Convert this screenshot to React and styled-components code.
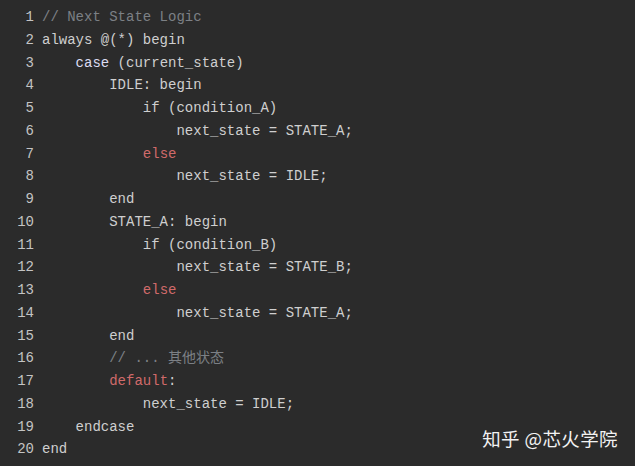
import React from "react";
import styled, { createGlobalStyle } from "styled-components";

const GlobalStyle = createGlobalStyle`
  html, body {
    margin: 0;
    padding: 0;
    background: #2b2b2b;
  }
`;

const Editor = styled.div`
  position: relative;
  width: 635px;
  height: 466px;
  box-sizing: border-box;
  padding-top: 6px;
  background: #2b2b2b;
  font-family: "Liberation Mono", "DejaVu Sans Mono", "Noto Sans CJK SC", monospace;
  font-size: 14px;
  overflow: hidden;
`;

const Line = styled.div`
  display: flex;
  height: 22.75px;
  line-height: 22.75px;
  white-space: pre;
`;

const LineNo = styled.span`
  width: 34px;
  text-align: right;
  padding-right: 8px;
  color: #c4c4c4;
`;

const Code = styled.span`
  color: #cfcfcf;
`;

const Tok = styled.span`
  color: ${(p) =>
    p.$kind === "comment" ? "#7c8085" : p.$kind === "kw" ? "#dcdcf2" : "#d06a6a"};
`;

const Watermark = styled.div`
  position: absolute;
  right: 17px;
  bottom: 15px;
  color: #f2f2f2;
  font-family: "Noto Sans CJK SC", "Noto Sans", sans-serif;
  font-size: 18.5px;
  letter-spacing: 0.4px;
`;

const lines = [
  [["comment", "// Next State Logic"]],
  [[null, "always @(*) begin"]],
  [[null, "    "], ["kw", "case"], [null, " (current_state)"]],
  [[null, "        IDLE: begin"]],
  [[null, "            if (condition_A)"]],
  [[null, "                next_state = STATE_A;"]],
  [[null, "            "], ["red", "else"]],
  [[null, "                next_state = IDLE;"]],
  [[null, "        end"]],
  [[null, "        STATE_A: begin"]],
  [[null, "            if (condition_B)"]],
  [[null, "                next_state = STATE_B;"]],
  [[null, "            "], ["red", "else"]],
  [[null, "                next_state = STATE_A;"]],
  [[null, "        end"]],
  [[null, "        "], ["comment", "// ... 其他状态"]],
  [[null, "        "], ["red", "default"], [null, ":"]],
  [[null, "            next_state = IDLE;"]],
  [[null, "    endcase"]],
  [[null, "end"]],
];

export default function App() {
  return (
    <>
      <GlobalStyle />
      <Editor>
        {lines.map((parts, i) => (
          <Line key={i}>
            <LineNo>{i + 1}</LineNo>
            <Code>
              {parts.map(([kind, text], j) =>
                kind ? (
                  <Tok key={j} $kind={kind}>
                    {text}
                  </Tok>
                ) : (
                  <React.Fragment key={j}>{text}</React.Fragment>
                )
              )}
            </Code>
          </Line>
        ))}
        <Watermark>知乎 @芯火学院</Watermark>
      </Editor>
    </>
  );
}
